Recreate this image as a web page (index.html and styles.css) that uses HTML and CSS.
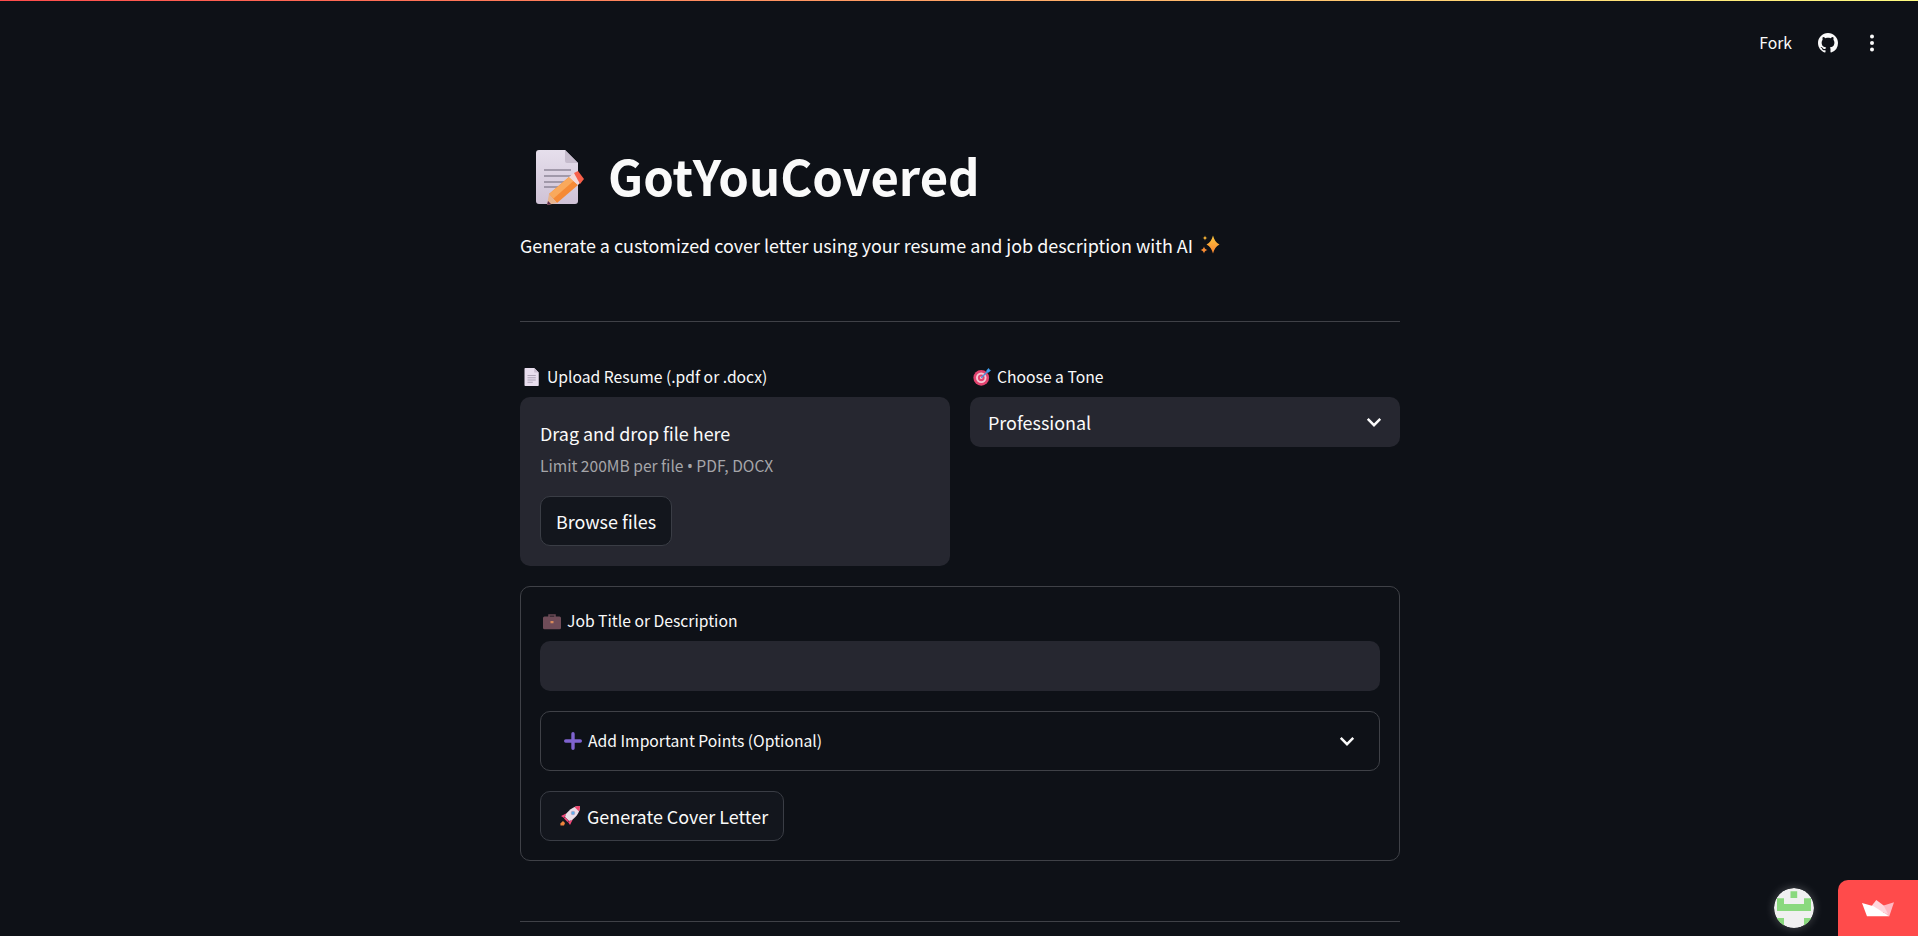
FILE: index.html
```html
<!DOCTYPE html>
<html lang="en">
<head>
  <meta charset="UTF-8" />
  <title>GotYouCovered</title>
  <link rel="stylesheet" href="styles.css">
</head>
<body>
  <div class="topbar"></div>

  <div class="toolbar">
    <span class="fork">Fork</span>
    <svg class="gh" viewBox="0 0 16 16"><path fill="#fafafa" d="M8 0C3.58 0 0 3.58 0 8c0 3.54 2.29 6.53 5.47 7.59.4.07.55-.17.55-.38 0-.19-.01-.82-.01-1.49-2.01.37-2.53-.49-2.69-.94-.09-.23-.48-.94-.82-1.13-.28-.15-.68-.52-.01-.53.63-.01 1.08.58 1.23.82.72 1.21 1.87.87 2.33.66.07-.52.28-.87.51-1.07-1.78-.2-3.64-.89-3.64-3.95 0-.87.31-1.59.82-2.15-.08-.2-.36-1.02.08-2.12 0 0 .67-.21 2.2.82.64-.18 1.32-.27 2-.27s1.36.09 2 .27c1.53-1.04 2.2-.82 2.2-.82.44 1.1.16 1.92.08 2.12.51.56.82 1.27.82 2.15 0 3.07-1.87 3.75-3.65 3.95.29.25.54.73.54 1.48 0 1.07-.01 1.93-.01 2.2 0 .21.15.46.55.38A8.01 8.01 0 0 0 16 8c0-4.42-3.58-8-8-8z"/></svg>
    <svg class="dots" viewBox="0 0 6 20"><circle cx="3" cy="3.500" r="2" fill="#fafafa"/><circle cx="3" cy="10" r="2" fill="#fafafa"/><circle cx="3" cy="16.500" r="2" fill="#fafafa"/></svg>
  </div>

  <div class="container">
    <h1 class="title">
      <svg class="title-icon" viewBox="0 0 48 55">
        <defs>
          <linearGradient id="docFill" x1="0" y1="0" x2="0" y2="1"><stop offset="0" stop-color="#e6dfec"/><stop offset="1" stop-color="#cfc2d6"/></linearGradient>
        </defs>
        <path fill="url(#docFill)" d="M3 0h26l13 13v38a3 3 0 0 1-3 3H3a3 3 0 0 1-3-3V3a3 3 0 0 1 3-3z"/>
        <path fill="#c6bccd" d="M29 0l13 13H31a2 2 0 0 1-2-2z"/>
        <path stroke="#8f8798" stroke-width="1.700" d="M8 20h27M8 26h27M8 32h27M8 37h14"/>
        <path fill="#f58a36" d="M33 27l9 8-21 18-8-9z"/>
        <path fill="#f9a95c" d="M33 27l4.500 4-20 17.500-4.500-4.500z"/>
        <path fill="#f3d8d8" d="M33 27l5-4 7 9-3 3z"/>
        <path fill="#f8604a" d="M38 23l4-2 6 8-4 5z"/>
        <path fill="#e7b48e" d="M13 44l8 9-10 2z"/>
        <path fill="#5b2a4e" d="M12 51l3 3-4 1z"/>
      </svg>
      <span>GotYouCovered</span>
    </h1>
    <p class="subtitle">Generate a customized cover letter using your resume and job description with AI
      <svg class="sparkle" viewBox="0 0 20 20">
        <defs>
          <linearGradient id="sparkFill" x1="0" y1="0" x2="0" y2="1"><stop offset="0" stop-color="#fdc93f"/><stop offset="1" stop-color="#f9822f"/></linearGradient>
        </defs>
        <path fill="url(#sparkFill)" d="M13 .5C14.200 5 16 7.500 19.500 9.500 16 11.500 14.200 14 13 18.500 11.800 14 10 11.500 6.500 9.500 10 7.500 11.800 5 13 .5z"/>
        <path fill="#fbb636" d="M5 .5c.3 1.600.9 2.200 2.500 2.500C5.900 3.300 5.300 3.900 5 5.500 4.700 3.900 4.100 3.300 2.500 3 4.100 2.700 4.700 2.100 5 .5z"/>
        <path fill="#f98c34" d="M4 11.500c.4 2 1.300 3 3.500 3.500-2.200.5-3.100 1.500-3.500 3.500-.4-2-1.300-3-3.500-3.500 2.200-.5 3.100-1.500 3.500-3.500z"/>
      </svg>
    </p>

    <hr class="divider">

    <div class="columns">
      <div class="col">
        <label class="field-label">
          <svg class="emoji" viewBox="0 0 20 24"><path fill="#e8deee" d="M1 0h12l6 6v17a1 1 0 0 1-1 1H1a1 1 0 0 1-1-1V1a1 1 0 0 1 1-1z"/><path fill="#c9bdd0" d="M13 0l6 6h-6z"/><path stroke="#9c93a6" stroke-width="1" d="M4 10h11M4 13h11M4 16h11M4 19h7"/></svg>
          Upload Resume (.pdf or .docx)
        </label>
        <div class="dropzone">
          <div class="drop-title">Drag and drop file here</div>
          <div class="drop-hint">Limit 200MB per file <span class="bullet">•</span> PDF, DOCX</div>
          <button class="btn browse">Browse files</button>
        </div>
      </div>
      <div class="col">
        <label class="field-label">
          <svg class="emoji" viewBox="0 0 24 24"><circle cx="11" cy="13" r="10.500" fill="#e2436f"/><circle cx="11" cy="13" r="7" fill="#f5c9d6"/><circle cx="11" cy="13" r="4.500" fill="#e2436f"/><circle cx="11" cy="13" r="1.800" fill="#f5c9d6"/><path stroke="#4a90d9" stroke-width="2" d="M11 13L20 4"/><path fill="#3fa0ee" d="M18 3l3-3 1 2 2 1-3 3h-3z"/></svg>
          Choose a Tone
        </label>
        <div class="select">
          <span>Professional</span>
          <svg class="chev" viewBox="0 0 16 16"><path fill="none" stroke="#fafafa" stroke-width="2" d="M3 5.500l5 5 5-5"/></svg>
        </div>
      </div>
    </div>

    <div class="form-box">
      <label class="field-label job-label">
        <svg class="emoji" viewBox="0 0 24 22"><path fill="none" stroke="#6b4a55" stroke-width="2" d="M8 6V3h8v3"/><rect y="5" width="24" height="17" rx="2" fill="#6f4c58"/><rect x="10" y="11" width="4" height="3" fill="#d98a5b"/></svg>
        Job Title or Description
      </label>
      <div class="text-input"></div>
      <div class="expander">
        <svg class="plus" viewBox="0 0 18 18"><path stroke="#7f63cf" stroke-width="3.400" stroke-linecap="round" d="M9 1.700v14.600M1.700 9h14.600"/></svg>
        <span>Add Important Points (Optional)</span>
        <svg class="chev" viewBox="0 0 16 16"><path fill="none" stroke="#fafafa" stroke-width="2" d="M3 5.500l5 5 5-5"/></svg>
      </div>
      <button class="btn generate">
        <svg class="rocket" viewBox="0 0 20 20">
          <path fill="#f2477a" d="M7 7L1 10l3 2zM13 13l-3 6-2-3z"/>
          <path fill="#eadfe8" d="M20 0C14 0 10 3 6 8L5 11l4 4 3-1c5-4 8-8 8-14z"/>
          <path fill="#f0476f" d="M20 0c-2 0-4 .4-5.500 1l4.500 4.500C19.600 4 20 2 20 0z"/>
          <circle cx="13" cy="7" r="2.300" fill="#b9a9c6"/>
          <circle cx="13" cy="7" r="1.500" fill="#5fb0ec"/>
          <path fill="#f2477a" d="M5 11l4 4-1.500 1L4 12.500z"/>
          <path fill="#f0843c" d="M3 15l2 2-1 2.500H.5L.3 17.500z"/>
        </svg>
        Generate Cover Letter
      </button>
    </div>

    <hr class="divider bottom">
  </div>

  <div class="avatar">
    <svg viewBox="0 0 40 40"><circle cx="20" cy="20" r="20" fill="#f0f0f0"/><path fill="#8ad97e" d="M16.500 3.300h6.700V10h-6.700zM3 10.300h7v5.700h20v-5.700h7V23H3zM0 30h10v10H0zM30 30h10v10H30z"/></svg>
  </div>
  <div class="badge">
    <svg viewBox="0 0 32 17">
      <path fill="#ffb8c2" d="M32 2.300L27.300 16.300 22 14l-.3-8.400z"/>
      <path fill="#ffd6dd" d="M14.300 0l7.400 5.600L26 14 8 8z"/>
      <path fill="#fff" d="M0 3l11.600 3.300L27.300 16.300H5z"/>
    </svg>
  </div>
</body>
</html>
```

FILE: styles.css
```css
* {
  box-sizing: border-box;
}
html, body {
  height: 100%;
}
body {
  margin: 0;
  overflow: hidden;
  position: relative;
  background-color: #0e1117;
  color: #fafafa;
  font-family: "Noto Sans CJK SC", "Noto Sans", sans-serif;
  font-size: 17.93px;
}
.topbar {
  height: 1px;
  background: linear-gradient(90deg, #ff4b4b, #fffd80);
}

.toolbar {
  position: absolute;
  top: 2px;
  right: 0;
  height: 81px;
  display: flex;
  align-items: center;
  padding-right: 43px;
}
.fork {
  font-size: 15.7px;
  line-height: 24px;
}
.gh {
  width: 20px;
  height: 20px;
  margin-left: 26px;
}
.dots {
  width: 6px;
  height: 20px;
  margin-left: 31px;
}

.container {
  width: 880px;
  margin-left: 520px;
  padding-top: 140px;
}
.title {
  margin: 0;
  display: flex;
  align-items: center;
  font-size: 49px;
  font-weight: 700;
  line-height: 68px;
  height: 68px;
}
.title-icon {
  width: 48px;
  height: 55px;
  margin: 4px 24px 0 16px;
}
.subtitle {
  margin: 20px 0 0;
  font-size: 17.93px;
  line-height: 32px;
  display: flex;
  align-items: center;
  gap: 7px;
}
.sparkle {
  width: 20px;
  height: 20px;
}

.divider {
  margin: 60px 0 0;
  border: none;
  border-top: 1px solid #3f4147;
}
.divider.bottom {
  margin-top: 60px;
}

.columns {
  display: flex;
  gap: 20px;
  margin-top: 45px;
}
.col {
  flex: 1;
}
.field-label {
  display: flex;
  align-items: center;
  gap: 6px;
  height: 20px;
  margin-bottom: 10px;
  font-size: 15.7px;
  line-height: 20px;
}
.emoji {
  width: 18px;
  height: 18px;
  margin-left: 3px;
}

.dropzone {
  height: 169px;
  padding: 18px 20px 20px;
  background: #262730;
  border-radius: 10px;
}
.drop-title {
  font-size: 17.93px;
  line-height: 36px;
}
.drop-hint {
  margin-top: 2px;
  font-size: 15.6px;
  line-height: 24px;
  color: #a5a5a9;
}
.bullet {
  font-family: "Noto Sans", sans-serif;
}
.btn {
  font-family: inherit;
  font-size: 17.93px;
  color: #fafafa;
  background: #13161d;
  border: 1px solid #3a3d45;
  border-radius: 10px;
  height: 50px;
  cursor: pointer;
}
.browse {
  margin-top: 18px;
  width: 132px;
  padding: 0 0 1px;
}

.select {
  height: 50px;
  padding: 0 16px 0 18px;
  display: flex;
  align-items: center;
  justify-content: space-between;
  background: #262730;
  border-radius: 10px;
}
.chev {
  width: 20px;
  height: 20px;
}

.form-box {
  margin-top: 20px;
  padding: 20px 19px 19px;
  height: 275px;
  border: 1px solid #3f4147;
  border-radius: 10px;
}
.job-label {
  margin-top: 4px;
  margin-bottom: 10px;
}
.text-input {
  height: 50px;
  background: #262730;
  border-radius: 10px;
}
.expander {
  margin-top: 20px;
  height: 60px;
  padding: 0 22px 0 23px;
  display: flex;
  align-items: center;
  gap: 6px;
  font-size: 15.7px;
  border: 1px solid #3f4147;
  border-radius: 10px;
}
.expander span {
  flex: 1;
  padding-bottom: 2px;
}
.plus {
  width: 18px;
  height: 18px;
}
.generate {
  margin-top: 20px;
  display: flex;
  align-items: center;
  gap: 7px;
  padding: 0 15px 1px 19px;
}
.rocket {
  width: 20px;
  height: 20px;
}

.avatar {
  position: absolute;
  right: 104px;
  bottom: 8px;
  width: 40px;
  height: 40px;
  border-radius: 50%;
  overflow: hidden;
  box-shadow: 0 0 10px rgba(255,255,255,.25);
}
.avatar svg {
  display: block;
}
.badge {
  position: absolute;
  right: 0;
  bottom: 0;
  width: 80px;
  height: 56px;
  background: #ff4b4b;
  border-top-left-radius: 10px;
  display: flex;
  align-items: center;
  justify-content: center;
}
.badge svg {
  width: 32px;
  height: 17px;
}
```
